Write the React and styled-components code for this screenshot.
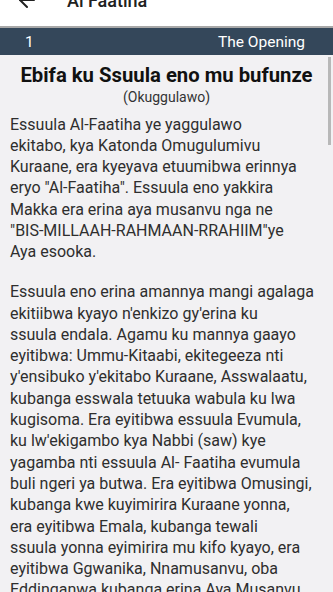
import React from 'react';
import styled, { createGlobalStyle } from 'styled-components';
import { ArrowLeft } from 'lucide-react';

const GlobalStyle = createGlobalStyle`
  html, body {
    margin: 0;
    padding: 0;
    background: #f2f1f3;
  }
  * {
    box-sizing: border-box;
  }
`;

const Screen = styled.div`
  position: relative;
  width: 333px;
  height: 592px;
  overflow: hidden;
  background: #f2f1f3;
  font-family: Roboto, 'Noto Sans', 'Liberation Sans', sans-serif;
`;

// the page is scrolled, so the toolbar only shows its lower part
const AppBar = styled.div`
  display: flex;
  align-items: center;
  gap: 28px;
  height: 58px;
  margin-top: -30px;
  padding: 4px 0 0 15px;
  background: #ffffff;
  border-bottom: 2px solid #a8a8a8;
  color: #212121;
`;

const AppTitle = styled.div`
  font-size: 18px;
  font-weight: 500;
`;

const InfoBar = styled.div`
  display: flex;
  align-items: center;
  justify-content: space-between;
  height: 27px;
  padding: 0 28px 0 25px;
  background: #34475a;
  color: #ffffff;
  font-size: 15.5px;
`;

const Content = styled.div`
  padding: 8px 10px 0 10px;
`;

const Heading = styled.h1`
  margin: 0;
  text-align: center;
  font-size: 20.3px;
  font-weight: 700;
  line-height: 25px;
  color: #111111;
`;

const SubHeading = styled.div`
  margin-top: 1px;
  text-align: center;
  font-size: 14px;
  line-height: 17px;
  color: #333333;
`;

const Paragraph = styled.p`
  margin: ${({ first }) => (first ? '7.5px' : '18.7px')} 0 0 0;
  font-size: 16px;
  line-height: 21.3px;
  color: #2e2e2e;
  white-space: nowrap;
`;

const ScrollThumb = styled.div`
  position: absolute;
  top: 57px;
  right: 2px;
  width: 3px;
  height: 88px;
  background: #b8b8b8;
`;

const paragraphs = [
  [
    'Essuula Al-Faatiha ye yaggulawo',
    'ekitabo, kya Katonda Omugulumivu',
    'Kuraane, era kyeyava etuumibwa erinnya',
    'eryo "Al-Faatiha". Essuula eno yakkira',
    'Makka era erina aya musanvu nga ne',
    '"BIS-MILLAAH-RAHMAAN-RRAHIIM"ye',
    'Aya esooka.',
  ],
  [
    'Essuula eno erina amannya mangi agalaga',
    "ekitiibwa kyayo n'enkizo gy'erina ku",
    'ssuula endala. Agamu ku mannya gaayo',
    'eyitibwa: Ummu-Kitaabi, ekitegeeza nti',
    "y'ensibuko y'ekitabo Kuraane, Asswalaatu,",
    'kubanga esswala tetuuka wabula ku lwa',
    'kugisoma. Era eyitibwa essuula Evumula,',
    "ku lw'ekigambo kya Nabbi (saw) kye",
    'yagamba nti essuula Al- Faatiha evumula',
    'buli ngeri ya butwa. Era eyitibwa Omusingi,',
    'kubanga kwe kuyimirira Kuraane yonna,',
    'era eyitibwa Emala, kubanga tewali',
    'ssuula yonna eyimirira mu kifo kyayo, era',
    'eyitibwa Ggwanika, Nnamusanvu, oba',
    'Eddinganwa kubanga erina Aya Musanvu',
  ],
];

const App = () => (
  <Screen>
    <GlobalStyle />
    <AppBar>
      <ArrowLeft size={24} strokeWidth={2} />
      <AppTitle>Al Faatiha</AppTitle>
    </AppBar>
    <InfoBar>
      <span>1</span>
      <span>The Opening</span>
    </InfoBar>
    <Content>
      <Heading>Ebifa ku Ssuula eno mu bufunze</Heading>
      <SubHeading>(Okuggulawo)</SubHeading>
      {paragraphs.map((lines, i) => (
        <Paragraph key={i} first={i === 0}>
          {lines.map((line, j) => (
            <React.Fragment key={j}>
              {line}
              {j < lines.length - 1 && <br />}
            </React.Fragment>
          ))}
        </Paragraph>
      ))}
    </Content>
    <ScrollThumb />
  </Screen>
);

export default App;
